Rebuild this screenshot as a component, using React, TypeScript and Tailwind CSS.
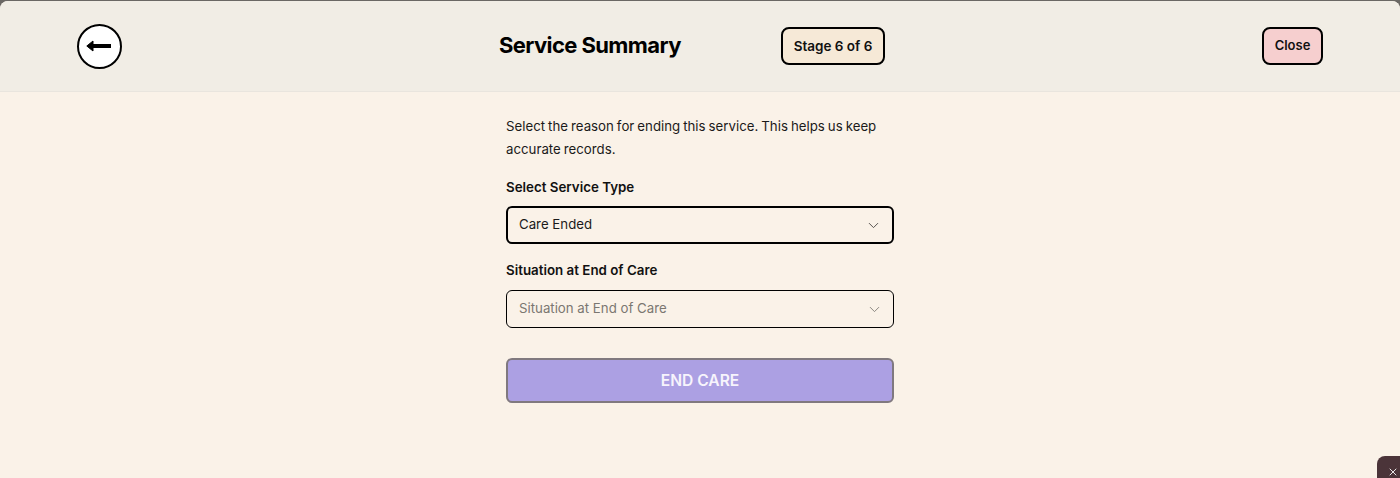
import React from 'react';
import { ChevronDown, X } from 'lucide-react';

const font = 'font-["Inter",sans-serif]';

const Select = ({ value, placeholder, strong }: { value: string; placeholder?: boolean; strong?: boolean }) => (
  <div
    className={`flex h-[38px] w-full items-center justify-between rounded-md border-black bg-[#faf2e8] pr-[10px] text-[13.25px] ${
      strong ? 'border-2 pl-[11px]' : 'border pl-3'
    } ${placeholder ? 'text-[#7b7771]' : 'text-[#1a1a1a]'}`}
  >
    <span>{value}</span>
    <ChevronDown size={17} strokeWidth={1.4} className={placeholder ? 'text-[#8a8680]' : 'text-[#55524e]'} />
  </div>
);

export default function App() {
  return (
    <div className={`${font} relative h-[478px] w-full overflow-hidden bg-[#6b6864]`}>
      <div className="mt-px h-[477px] overflow-hidden rounded-t-[8px] bg-[#faf2e8]">
        <header className="flex h-[91px] items-center justify-between border-b border-[#e9e5de] bg-[#f1ede5] px-[77px]">
          <button className="flex h-[45px] w-[45px] items-center justify-center rounded-full border-2 border-black bg-white">
            <svg width="25" height="12" viewBox="0 0 25 12" fill="none" className="mr-[2px]">
              <path d="M6 6H25" stroke="black" strokeWidth="4" />
              <path d="M0.8 6L7 1V11Z" fill="black" stroke="black" strokeWidth="1" strokeLinejoin="round" />
            </svg>
          </button>
          <div className="flex items-center gap-[101px]">
            <h1 className="mb-px w-[181px] whitespace-nowrap text-[22px] font-bold tracking-[-0.6px] text-black">Service Summary</h1>
            <div className="flex h-[38px] w-[104px] items-center justify-center rounded-lg border-2 border-black bg-[#f6e9d7] text-[13.5px] font-semibold text-[#111]">
              Stage 6 of 6
            </div>
          </div>
          <button className="flex h-[38px] w-[61px] items-center justify-center rounded-lg border-2 border-black bg-[#f6cfcf] text-[13px] font-semibold text-[#111]">
            Close
          </button>
        </header>
        <main className="mx-auto flex w-[388px] flex-col pt-[23px]">
          <p className="text-[13.25px] leading-[23px] text-[#1a1a1a] [word-spacing:-0.7px]">
            Select the reason for ending this service. This helps us keep accurate records.
          </p>
          <label className="mt-[15px] text-[13.35px] font-semibold leading-[23px] text-[#111]">Select Service Type</label>
          <div className="mt-[7px]">
            <Select value="Care Ended" strong />
          </div>
          <label className="mt-[15px] text-[13.35px] font-semibold leading-[23px] text-[#111]">Situation at End of Care</label>
          <div className="mt-2">
            <Select value="Situation at End of Care" placeholder />
          </div>
          <button className="mt-[30px] h-[45px] w-full rounded-md border-2 border-[#80797f] bg-[#aca0e3] text-[15.6px] font-semibold text-[#f7f4fc]">
            END CARE
          </button>
        </main>
      </div>
      <div className="absolute -bottom-4 -right-4 flex h-[38px] w-[39px] items-start justify-start rounded-lg bg-[#4b3439] pl-[10px] pt-[10px] text-white">
        <X size={12} strokeWidth={1.75} />
      </div>
    </div>
  );
}
